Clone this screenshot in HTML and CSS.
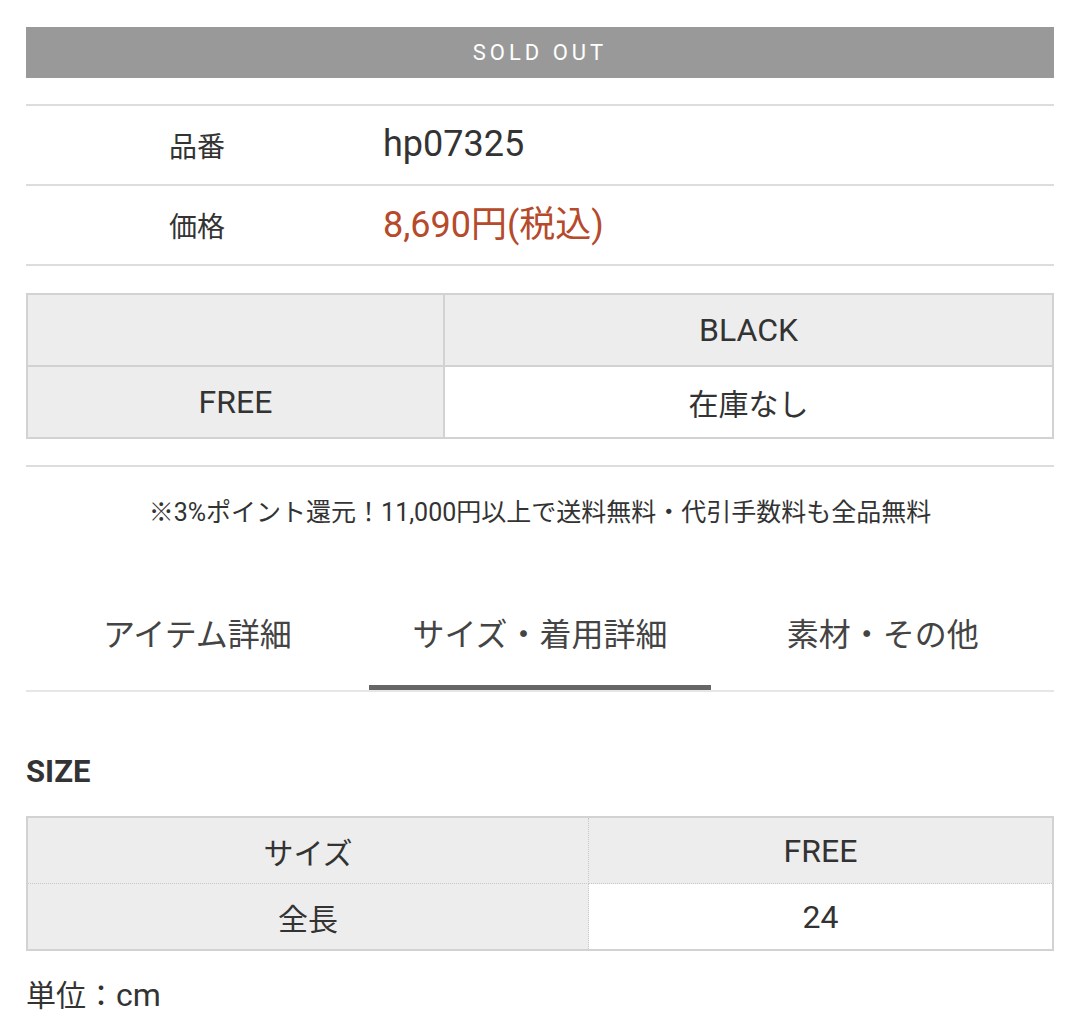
FILE: index.html
```html
<!DOCTYPE html>
<html lang="ja">
<head>
<meta charset="utf-8">
<link rel="stylesheet" href="styles.css">
</head>
<body>
<div class="page">
  <div class="soldout">SOLD OUT</div>

  <div class="spec">
    <div class="spec-row">
      <div class="spec-label">品番</div>
      <div class="spec-value">hp07325</div>
    </div>
    <div class="spec-row">
      <div class="spec-label">価格</div>
      <div class="spec-value price">8,690円(税込)</div>
    </div>
  </div>

  <table class="stock">
    <tr>
      <th class="stock-corner"></th>
      <th class="en">BLACK</th>
    </tr>
    <tr>
      <th class="en">FREE</th>
      <td>在庫なし</td>
    </tr>
  </table>

  <div class="notice">※3%ポイント還元！11,000円以上で送料無料・代引手数料も全品無料</div>

  <div class="tabs">
    <div class="tab">アイテム詳細</div>
    <div class="tab active">サイズ・着用詳細</div>
    <div class="tab">素材・その他</div>
  </div>

  <h2 class="size-title">SIZE</h2>

  <table class="size">
    <tr class="size-head">
      <th class="size-label">サイズ</th>
      <th class="en">FREE</th>
    </tr>
    <tr>
      <th class="size-label">全長</th>
      <td class="en">24</td>
    </tr>
  </table>

  <p class="unit">単位：<span class="unit-en">cm</span></p>
</div>
</body>
</html>
```

FILE: styles.css
```css
html, body {
  margin: 0;
  padding: 0;
  background: #fff;
}

body {
  font-family: Roboto, "Noto Sans CJK JP", sans-serif;
  color: #333;
}

.page {
  width: 1028px;
  margin-left: 26px;
  padding-top: 27px;
}

.soldout {
  height: 51px;
  background: #999;
  color: #fff;
  font-size: 22px;
  letter-spacing: 4px;
  display: flex;
  align-items: center;
  justify-content: center;
}

.spec {
  margin-top: 26px;
  border-top: 2px solid #ddd;
}

.spec-row {
  display: flex;
  align-items: center;
  height: 78px;
  border-bottom: 2px solid #ddd;
}

.spec-label {
  width: 342px;
  text-align: center;
  font-size: 28px;
}

.spec-value {
  padding-left: 15px;
  font-size: 36px;
  line-height: 44px;
  margin-top: -2px;
}

.spec-value.price {
  color: #b64a2c;
  margin-top: 0;
}

.stock {
  margin-top: 27px;
  width: 100%;
  border-collapse: collapse;
  font-size: 30px;
}

.stock th,
.stock td {
  border: 2px solid #d2d2d2;
  font-weight: normal;
  text-align: center;
  height: 70px;
  padding: 0;
}

.stock th {
  background: #ededed;
}

.stock-corner {
  width: 415px;
}

.stock td {
  background: #fff;
}

.stock .en,
.size .en {
  font-size: 32px;
}

.notice {
  margin-top: 26px;
  border-top: 2px solid #ddd;
  padding-top: 29px;
  text-align: center;
  font-size: 25px;
  line-height: 34px;
}

.tabs {
  margin-top: 72px;
  display: flex;
  border-bottom: 2px solid #e6e6e6;
}

.tab {
  flex: 1;
  text-align: center;
  font-size: 32px;
  color: #444;
  height: 88px;
  line-height: 66px;
  box-sizing: border-box;
}

.tab.active {
  border-bottom: 5px solid #666;
  margin-bottom: -2px;
}

.size-title {
  margin: 58px 0 0;
  font-size: 31px;
  font-weight: bold;
  line-height: 44px;
  color: #333;
}

.size {
  margin-top: 22px;
  width: 100%;
  border-collapse: collapse;
  font-size: 30px;
  border: 2px solid #d2d2d2;
}

.size th,
.size td {
  font-weight: normal;
  text-align: center;
  height: 65px;
  padding: 0;
  border: 1px dotted #c8c8c8;
}

.size th {
  background: #ededed;
}

.size-head td,
.size-head th {
  background: #ededed;
}

.size-label {
  width: 560px;
}

.size td {
  background: #fff;
}

.unit {
  margin: 20px 0 0;
  font-size: 30px;
  line-height: 48px;
}

.unit-en {
  font-size: 32px;
}
```
